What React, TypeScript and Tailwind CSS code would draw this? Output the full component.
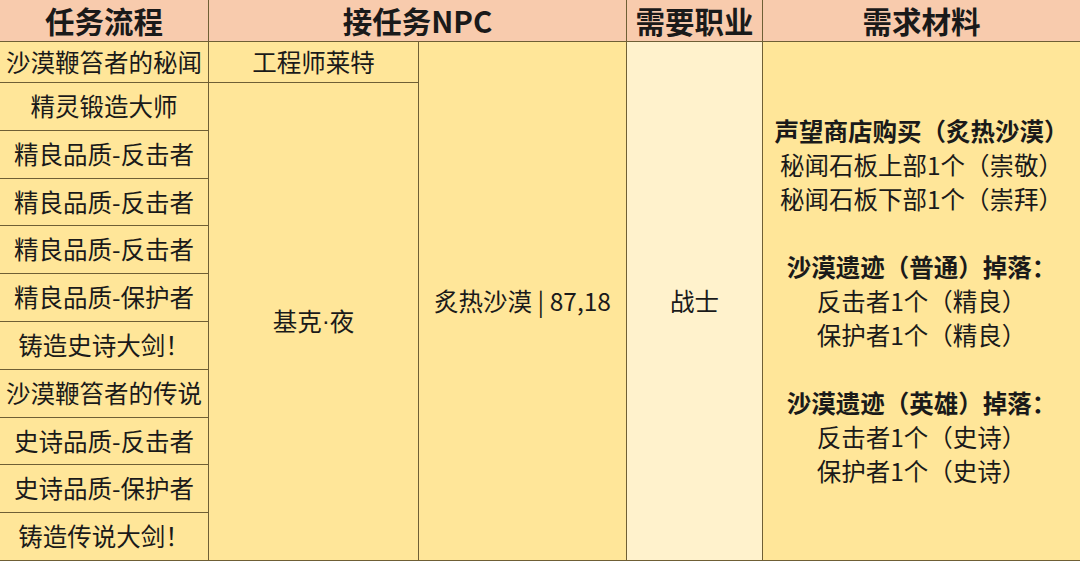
const steps = [
  "沙漠鞭笞者的秘闻",
  "精灵锻造大师",
  "精良品质-反击者",
  "精良品质-反击者",
  "精良品质-反击者",
  "精良品质-保护者",
  "铸造史诗大剑！",
  "沙漠鞭笞者的传说",
  "史诗品质-反击者",
  "史诗品质-保护者",
  "铸造传说大剑！",
];

const materials: { text: string; bold?: boolean }[] = [
  { text: "声望商店购买（炙热沙漠）", bold: true },
  { text: "秘闻石板上部1个（崇敬）" },
  { text: "秘闻石板下部1个（崇拜）" },
  { text: "" },
  { text: "沙漠遗迹（普通）掉落：", bold: true },
  { text: "反击者1个（精良）" },
  { text: "保护者1个（精良）" },
  { text: "" },
  { text: "沙漠遗迹（英雄）掉落：", bold: true },
  { text: "反击者1个（史诗）" },
  { text: "保护者1个（史诗）" },
];

const cell = "flex items-center justify-center text-center";
const head = `${cell} bg-[#f8cbad] text-[29.5px] font-bold`;

export default function App() {
  return (
    <div className="w-[1080px] h-[561px] overflow-hidden bg-white font-['Noto_Sans_CJK_SC','Noto_Sans',sans-serif] text-[#1a1a1a]">
      <div className="grid h-[561px] grid-cols-[208px_209px_207px_135px_1fr] grid-rows-[41px_40px_repeat(10,1fr)] gap-px border-b border-[#6f5f35] bg-[#6f5f35]">
        {/* header */}
        <div className={head}>任务流程</div>
        <div className={`${head} col-span-2`}>接任务NPC</div>
        <div className={head}>需要职业</div>
        <div className={head}>需求材料</div>

        {/* task steps */}
        {steps.map((s, i) => (
          <div
            key={i}
            className={`${cell} col-start-1 bg-[#ffe699] text-[24.5px] whitespace-nowrap`}
            style={{ gridRowStart: i + 2 }}
          >
            {s}
          </div>
        ))}

        <div className={`${cell} col-start-2 row-start-2 bg-[#ffe699] text-[24.5px]`}>工程师莱特</div>
        <div className={`${cell} col-start-2 row-start-3 row-end-13 bg-[#ffe699] text-[24.5px]`}>
          基克<span className="font-['Liberation_Sans',sans-serif]">·</span>夜
        </div>
        <div className={`${cell} col-start-3 row-start-2 row-end-13 bg-[#ffe699] text-[24.5px] whitespace-nowrap`}>
          炙热沙漠 | 87,18
        </div>
        <div className={`${cell} col-start-4 row-start-2 row-end-13 bg-[#fff2cc] text-[24.5px]`}>战士</div>
        <div className={`${cell} col-start-5 row-start-2 row-end-13 flex-col bg-[#ffe699] text-[24.5px] leading-[34px]`}>
          {materials.map((m, i) => (
            <div key={i} className={`h-[34px] whitespace-nowrap ${m.bold ? "font-bold" : ""}`}>
              {m.text}
            </div>
          ))}
        </div>
      </div>
    </div>
  );
}
